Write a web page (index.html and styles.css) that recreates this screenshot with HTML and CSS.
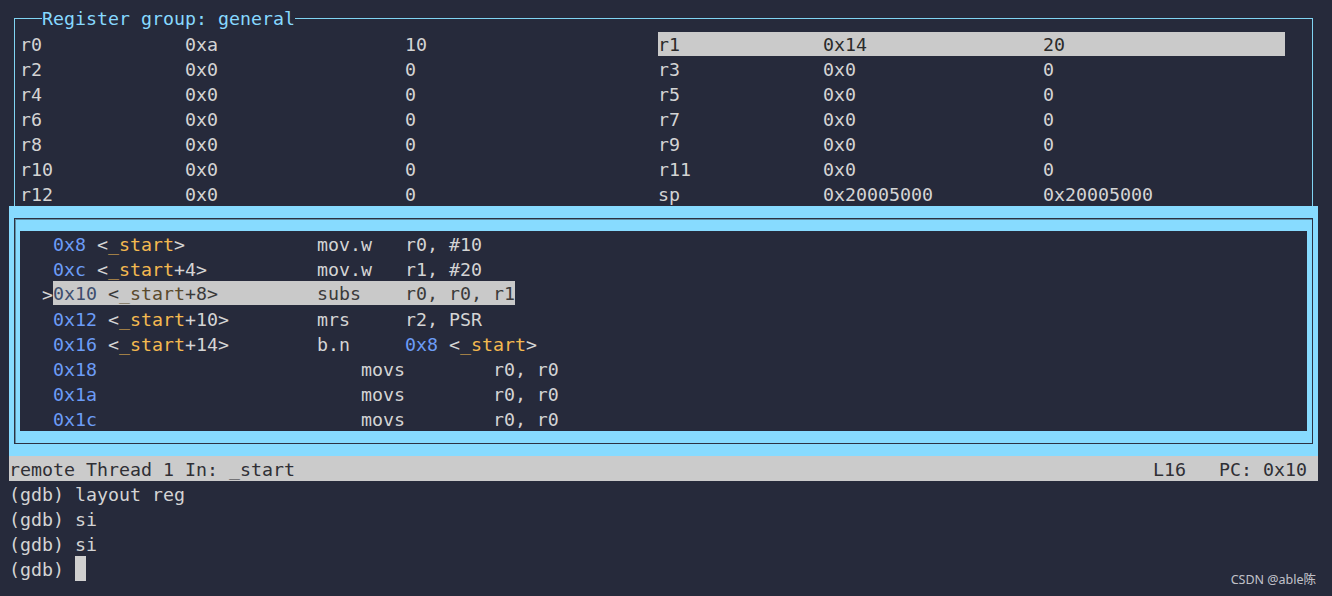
FILE: index.html
```
<!DOCTYPE html>
<html lang="en">
<head>
    <meta charset="UTF-8">
    <title>gdb tui - layout reg</title>
    <link rel="stylesheet" href="styles.css">
</head>
<body>
<!-- Terminal -->
<div class="term">

    <!-- Register window -->
    <div class="regs">
        <div class="regs-title"><span>Register group: general</span></div>
        <div class="reg-row">
            <div class="reg"><span>r0</span><span>0xa</span><span>10</span></div>
            <div class="reg sel"><span>r1</span><span>0x14</span><span>20</span></div>
        </div>
        <div class="reg-row">
            <div class="reg"><span>r2</span><span>0x0</span><span>0</span></div>
            <div class="reg"><span>r3</span><span>0x0</span><span>0</span></div>
        </div>
        <div class="reg-row">
            <div class="reg"><span>r4</span><span>0x0</span><span>0</span></div>
            <div class="reg"><span>r5</span><span>0x0</span><span>0</span></div>
        </div>
        <div class="reg-row">
            <div class="reg"><span>r6</span><span>0x0</span><span>0</span></div>
            <div class="reg"><span>r7</span><span>0x0</span><span>0</span></div>
        </div>
        <div class="reg-row">
            <div class="reg"><span>r8</span><span>0x0</span><span>0</span></div>
            <div class="reg"><span>r9</span><span>0x0</span><span>0</span></div>
        </div>
        <div class="reg-row">
            <div class="reg"><span>r10</span><span>0x0</span><span>0</span></div>
            <div class="reg"><span>r11</span><span>0x0</span><span>0</span></div>
        </div>
        <div class="reg-row">
            <div class="reg"><span>r12</span><span>0x0</span><span>0</span></div>
            <div class="reg"><span>sp</span><span>0x20005000</span><span>0x20005000</span></div>
        </div>
    </div>

    <!-- Source / asm window (active) -->
    <div class="src">
        <div class="src-frame">
            <div class="src-body">
<div class="line">   <span class="addr">0x8</span> &lt;<span class="sym">_start</span>&gt;            mov.w   r0, #10</div>
<div class="line">   <span class="addr">0xc</span> &lt;<span class="sym">_start</span>+4&gt;          mov.w   r1, #20</div>
<div class="line">  &gt;<span class="cur"><span class="addr">0x10</span> &lt;<span class="sym">_start</span>+8&gt;         subs    r0, r0, r1</span></div>
<div class="line">   <span class="addr">0x12</span> &lt;<span class="sym">_start</span>+10&gt;        mrs     r2, PSR</div>
<div class="line">   <span class="addr">0x16</span> &lt;<span class="sym">_start</span>+14&gt;        b.n     <span class="addr">0x8</span> &lt;<span class="sym">_start</span>&gt;</div>
<div class="line">   <span class="addr">0x18</span>                        movs        r0, r0</div>
<div class="line">   <span class="addr">0x1a</span>                        movs        r0, r0</div>
<div class="line">   <span class="addr">0x1c</span>                        movs        r0, r0</div>
            </div>
        </div>
    </div>

    <!-- Statuszeile -->
    <div class="status">
        <span>remote Thread 1 In: _start</span>
        <span>L16   PC: 0x10</span>
    </div>

    <!-- Kommandozeile -->
    <div class="cmd">
<div class="line">(gdb) layout reg</div>
<div class="line">(gdb) si</div>
<div class="line">(gdb) si</div>
<div class="line">(gdb) <span class="cursor"></span></div>
    </div>
</div>

<div class="watermark">CSDN @able陈</div>
</body>
</html>
```
FILE: styles.css
```
/* Grundlayout */
html, body {
    margin: 0;
    height: 100%;
    background-color: #262a3b;
}

body {
    position: relative;
    overflow: hidden;
}

/* Terminal: 11px x 25px Zellen */
.term {
    width: 1309px;
    padding: 6px 0 0 9px;
    font-family: "DejaVu Sans Mono", "Liberation Mono", monospace;
    font-size: 18.27px;
    line-height: 27px; /* Text 1px tiefer in der 25px-Zelle */
    color: #d4d4d4;
}

.line {
    height: 25px;
    white-space: pre;
}

/* Register-Fenster */
.regs {
    margin: 12px 5px 0 5px;
    border: 1px solid #80d4f2;
    border-bottom: none;
    padding-left: 5px;
}

.regs-title {
    height: 25px;
    margin-top: -13px;
    padding-left: 22px;
    line-height: 25px;
}

.regs-title span {
    background-color: #262a3b;
    color: #87d9ff;
}

.reg-row {
    display: grid;
    grid-template-columns: 638px 627px;
    height: 25px;
}

.reg {
    display: grid;
    grid-template-columns: 165px 220px 1fr;
    white-space: pre;
}

.reg.sel {
    background-color: #cacaca;
    color: #2b2b2b;
    height: 24px;
    margin-top: 1px;
    line-height: 25px;
}

/* Quelltext-Fenster (aktiv, blau umrandet) */
.src {
    background-color: #87dbff;
    padding: 12px 5px;
}

.src-frame {
    border: 1px solid #2c3142;
    box-shadow: inset 1px 1px 0 #5d90a8;
}

.src-body {
    margin: 12px 5px;
    height: 200px;
    background-color: #262a3b;
}

.addr {
    color: #6c9cf6;
}

.sym {
    color: #f4b950;
}

/* aktuelle Zeile */
.cur {
    display: inline-block;
    height: 24px;
    line-height: 26px;
    vertical-align: top;
    background-color: #c9c9c9;
    color: #3a3a3a;
}

.cur .addr {
    color: #3e4e6e;
}

.cur .sym {
    color: #5a4a2c;
}

/* Statuszeile */
.status {
    display: flex;
    justify-content: space-between;
    height: 25px;
    padding-right: 11px;
    background-color: #cbcbcb;
    color: #2f2f35;
    white-space: pre;
}

/* Kommandozeile */
.cursor {
    display: inline-block;
    width: 11px;
    height: 25px;
    vertical-align: top;
    background-color: #d0d0d0;
}

/* Wasserzeichen */
.watermark {
    position: absolute;
    right: 16px;
    bottom: 8px;
    font-family: "Noto Sans", "Noto Sans CJK SC", sans-serif;
    font-size: 12.5px;
    color: rgba(235, 235, 240, 0.8);
}
```
